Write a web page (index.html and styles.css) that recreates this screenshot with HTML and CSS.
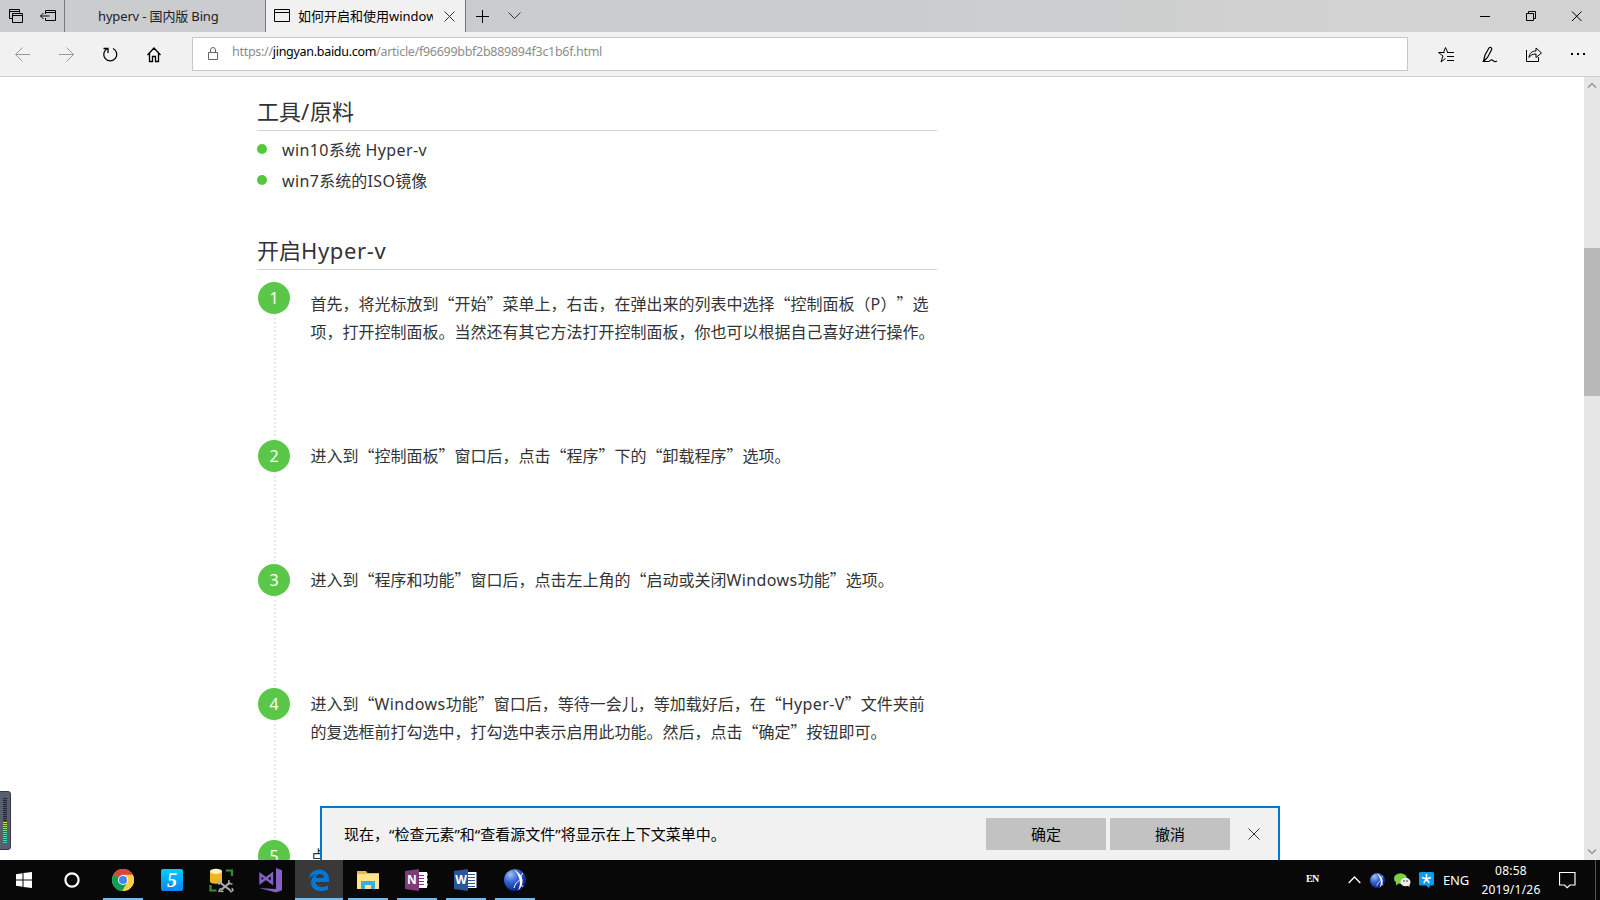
FILE: index.html
```html
<!DOCTYPE html>
<html lang="zh-CN">
<head>
<meta charset="utf-8">
<title>如何开启和使用windows</title>
<link rel="stylesheet" href="styles.css">
</head>
<body>
<svg width="0" height="0" class="defs">
  <defs>
    <radialGradient id="orb" cx=".3" cy=".25" r=".8"><stop offset="0" stop-color="#9fc0f4"/><stop offset=".45" stop-color="#3565cf"/><stop offset="1" stop-color="#0c1f8c"/></radialGradient>
    <symbol id="sphere" viewBox="0 0 22 22">
      <circle cx="11" cy="11" r="11" fill="url(#orb)"/>
      <path d="M10.500 1C15 3 18.500 7.500 18.500 12c0 3.500-1.500 7-4.500 9.500 1.500-3.500 2.300-6.500 1.800-9.500C15 8 13.500 4 10.500 1z" fill="#fff"/>
      <path d="M18.800 4c-1 1.500-1.800 3-2.300 5.500M16.500 13.500c.8 2 1.500 3.500 2.700 4.500M15.500 11.500C12.500 13 11 15.500 10 19" fill="none" stroke="#fff" stroke-width="1"/>
    </symbol>
  </defs>
</svg>

<header class="tabstrip">
  <div class="tab-tools">
    <svg class="i-stack" width="16" height="16" viewBox="0 0 16 16"><path d="M4.500 10.500h-3v-9h10v3M1.500 3.500h10M4.500 5.500h10v9h-10zM4.500 7.500h10" class="ln"/></svg>
    <svg class="i-aside" width="17" height="14" viewBox="0 0 17 14"><path d="M5.500 5V1.500h10v10h-10V9M5.500 3.500h10M.5 7h9M3.500 4L.5 7l3 3" class="ln"/></svg>
  </div>
  <div class="tab">hyperv - <span class="cn">国内版</span> Bing</div>
  <div class="tab active">
    <svg width="17" height="14" viewBox="0 0 17 14"><path d="M.5.5h15v12H.5zM.5 3.500h15" class="ln"/></svg>
    <div class="tab-title"><span class="cn">如何开启和使用</span>windows</div>
    <svg width="11" height="11" viewBox="0 0 11 11"><path d="M.5.500l10 10M10.500.5l-10 10" class="ln thin"/></svg>
  </div>
  <svg class="i-plus" width="13" height="13" viewBox="0 0 13 13"><path d="M6.500 0v13M0 6.500h13" class="ln"/></svg>
  <svg class="i-down" width="13" height="8" viewBox="0 0 13 8"><path d="M.5.500l6 6 6-6" class="ln thin"/></svg>
  <div class="window-buttons">
    <svg width="46" height="32"><path d="M18 16.500h10" class="ln"/></svg>
    <svg width="46" height="32"><path d="M18.500 13.500h7v7h-7zM20.500 13v-1.500h7v7H26" class="ln"/></svg>
    <svg width="46" height="32"><path d="M18 11.500l9.500 9.500M27.500 11.500L18 21" class="ln"/></svg>
  </div>
</header>

<nav class="toolbar">
  <div class="nav-buttons">
    <svg width="44" height="44"><path d="M30 22.500H15.500M22.500 15.500l-7 7 7 7" class="ln off"/></svg>
    <svg width="44" height="44"><path d="M15 22.500h14.500M22.500 15.500l7 7-7 7" class="ln off"/></svg>
    <svg width="44" height="44"><path d="M19.500 16.500a6.500 6.500 0 1 0 5.500 0M15.500 16.500h4.500v4.500" class="ln refresh"/></svg>
    <svg width="44" height="44"><path d="M15.500 23l6.500-7 6.500 7M17.500 21v8.500h3v-5h3v5h3V21" class="ln home"/></svg>
  </div>
  <div class="address">
    <svg width="11" height="14" viewBox="0 0 11 14"><path d="M.5 5.500h9v7h-9zM2.500 5.500V3a2.500 2.500 0 0 1 5 0v2.500" class="ln lock"/></svg>
    <span class="url">https://<b>jingyan.baidu.com</b>/article/f96699bbf2b889894f3c1b6f.html</span>
  </div>
  <div class="hub-buttons">
    <svg width="44" height="44"><path d="M19.500 20.500H13.500l4.500 3.500-2 6 4.500-3.500M15 20.500h3.500l2-5 2 4.500" class="ln"/><path d="M22 20.500h7M22 24.500h7M22 28.500h7" class="ln"/></svg>
    <svg width="44" height="44"><path d="M14.500 29.500l1.500-6.500 4-7c1-1.300 3.200-.3 2.700 1.500l-4.200 8-4 4h5.500c1.500-2 3-1.800 4-.8s2 1.500 4 .3" class="ln pen"/></svg>
    <svg width="44" height="44"><path d="M13.500 18v11.500h12V25" class="ln"/><path d="M16 25.500c.5-4.500 3-6.500 7-6.500v-3l5.500 5-5.500 4.500V22c-3 0-5 .5-7 3.500z" class="ln"/></svg>
    <svg width="44" height="44"><path d="M14 21h2v2h-2zM20 21h2v2h-2zM26 21h2v2h-2z"/></svg>
  </div>
</nav>

<main class="viewport">
  <article class="article">
    <h2 class="first">工具<span class="en">/</span>原料</h2>
    <ul class="tools">
      <li><span class="en">win10</span>系统<span class="en"> Hyper-v</span></li>
      <li><span class="en">win7</span>系统的<span class="en">ISO</span>镜像</li>
    </ul>
    <h2>开启<span class="en">Hyper-v</span></h2>
    <ol class="steps">
      <li class="tall"><i>1</i><p>首先，将光标放到“开始”菜单上，右击，在弹出来的列表中选择“控制面板（<span class="en">P</span>）”选<br>项，打开控制面板。当然还有其它方法打开控制面板，你也可以根据自己喜好进行操作。</p></li>
      <li><i>2</i><p>进入到“控制面板”窗口后，点击“程序”下的“卸载程序”选项。</p></li>
      <li><i>3</i><p>进入到“程序和功能”窗口后，点击左上角的“启动或关闭<span class="en">Windows</span>功能”选项。</p></li>
      <li class="two"><i>4</i><p>进入到“<span class="en">Windows</span>功能”窗口后，等待一会儿，等加载好后，在“<span class="en">Hyper-V</span>”文件夹前<br>的复选框前打勾选中，打勾选中表示启用此功能。然后，点击“确定”按钮即可。</p></li>
      <li><i>5</i><p>点</p></li>
    </ol>
  </article>
  <div class="scrollbar">
    <svg width="16" height="17"><path d="M4 10.500l4-4 4 4"/></svg>
    <div class="thumb"></div>
    <svg width="16" height="17"><path d="M4 6.500l4 4 4-4"/></svg>
  </div>
  <div class="meter"><div class="bars"></div></div>
  <div class="notice">
    <p>现在，<q>“</q>检查元素<q>”</q>和<q>“</q>查看源文件<q>”</q>将显示在上下文菜单中。</p>
    <button>确定</button>
    <button>撤消</button>
    <svg width="12" height="12"><path d="M.5.500l11 11M11.500.5l-11 11" class="ln thin"/></svg>
  </div>
</main>

<footer class="taskbar">
  <div class="app start"><svg width="16" height="16"><path fill="#fff" d="M0 2.200L6.500 1.200V7.500H0zM7.500 1L16 0v7.500H7.500zM0 8.500h6.500v6.300L0 13.800zM7.500 8.500H16V16l-8.500-1z"/></svg></div>
  <div class="app start"><svg width="16" height="16"><circle cx="8" cy="8" r="6.600" fill="none" stroke="#fff" stroke-width="2.200"/></svg></div>
  <div class="app run"><svg width="22" height="22" viewBox="0 0 22 22"><circle cx="11" cy="11" r="11" fill="#ffcd40"/><path d="M11 11L1.500 5.500a11 11 0 0 1 19 0z" fill="#db4437"/><path d="M1.500 5.500A11 11 0 0 0 10.500 22l4.500-8.500-4-2.500z" fill="#0f9d58"/><path d="M11 5.800h9.700A11 11 0 0 1 10.500 22L15 13.500z" fill="#ffcd40"/><circle cx="11" cy="11" r="5" fill="#fff"/><circle cx="11" cy="11" r="4.100" fill="#4285f4"/></svg></div>
  <div class="app"><div class="five">5</div></div>
  <div class="app"><svg width="25" height="25" viewBox="0 0 25 25"><path d="M1 3v10.500c0 3 12 3 12 0V3z" fill="#f2b41c"/><ellipse cx="7" cy="3.300" rx="6" ry="2.600" fill="#fff0c4"/><path d="M17 2.500h6v5.500M1.500 17v5.500h6" fill="none" stroke="#37912f" stroke-width="2.200"/><path d="M11 14.500l10.500 8M12 22l9-7.500" stroke="#aaa" stroke-width="2.200" fill="none"/><path d="M9 12.500l1 3.500 3-1.500M20 12l-.5 3.500 4 .5M14.500 23.500l-4.500-.5 1.500-3M23 20l1 2.500-3 1.500" stroke="#aaa" stroke-width="1.500" fill="none"/></svg></div>
  <div class="app"><svg width="25" height="25" viewBox="0 0 25 25"><path fill="#865fc5" d="M18 0l6 2.200v20L18 24.500 1 20l17 1z"/><path d="M2.500 6.500v8L14 6v9z" fill="none" stroke="#865fc5" stroke-width="2.400"/></svg></div>
  <div class="app run active"><svg width="22" height="22" viewBox="0 0 22 22"><path fill="#0078d7" d="M1 10C1.500 4 6 .5 11 .5c6.500 0 10 4.500 10 10V13H7.500c.3 3.500 3.500 5 6.800 5 2.200 0 4-.6 5.700-1.500v4C18 21.500 15.500 22 13 22c-6 0-10-3.500-10-8.500 0-3.500 2-6.300 5-7.500C4.500 6 2.500 8 1 10zm6.700-1h8.200c0-2.500-1.500-4-3.900-4S8 6.700 7.700 9z"/></svg></div>
  <div class="app run"><svg width="22" height="20" viewBox="0 0 22 20"><path fill="#e8b93c" d="M0 1h9l1.500 2H22v4H0z"/><path fill="#ffe38d" d="M0 4h22v15H0z"/><path fill="#38aee6" d="M4 19v-8h14v8h-4v-4H8v4z"/></svg></div>
  <div class="app run"><div class="office note"><b>N</b><svg width="9" height="18"><path d="M0 1h8v16H0z" fill="#fff"/><path d="M8 2h1v3H8zM8 7h1v3H8zM8 12h1v3H8z" fill="#b06aab"/><path d="M0 4.500h5M0 7.500h5M0 10.500h5M0 13.500h5" stroke="#80397b"/></svg></div></div>
  <div class="app run"><div class="office word"><b>W</b><svg width="9" height="18"><path d="M0 1h8.500v16H0z" fill="#fff"/><path d="M0 3.500h7M0 6.500h7M0 9.500h7M0 12.500h7M0 15.500h7" stroke="#2b579a"/></svg></div></div>
  <div class="app run"><svg width="22" height="22"><use href="#sphere"/></svg></div>
  <div class="tray">
    <span class="ime">EN</span>
    <svg class="t-up" width="13" height="8"><path d="M.7 7l5.800-6 5.800 6" fill="none" stroke="#fff" stroke-width="1.300"/></svg>
    <svg class="t-orb" width="15" height="15"><use href="#sphere"/></svg>
    <svg class="t-chat" width="17" height="14" viewBox="0 0 17 14"><ellipse cx="6.500" cy="5.500" rx="6.500" ry="5.300" fill="#7ed043"/><path d="M2 9l0 3.500L5 10z" fill="#7ed043"/><ellipse cx="11.500" cy="9" rx="5" ry="4.300" fill="#eee"/><path d="M13 12l2.500 2 0-3z" fill="#eee"/><circle cx="10" cy="8" r=".7"/><circle cx="13" cy="8" r=".7"/></svg>
    <svg class="t-star" width="15" height="16"><path d="M1.500 0h12Q15 0 15 1.500v10.500Q15 13.500 13.500 13.500H11l-1 2.500-3-2.500H1.500Q0 13.500 0 12v-10.500Q0 0 1.500 0z" fill="#0a9bf5"/><path d="M7.500 7V2M7.500 7l4.500-1.500M7.500 7l2.800 4M7.500 7l-2.800 4M7.500 7L3 5.500" fill="none" stroke="#fff" stroke-width="1.500"/></svg>
    <span class="lang">ENG</span>
    <div class="clock"><span>08:58</span><span>2019/1/26</span></div>
    <svg class="t-msg" width="17" height="17"><path d="M.5.500h15.500v12.500h-5L8.200 15.700 5.500 13h-5z" fill="none" stroke="#fff" stroke-width="1.200"/></svg>
    <div class="peek"></div>
  </div>
</footer>
</body>
</html>
```

FILE: styles.css
```css
* { box-sizing: border-box; }

body {
  margin: 0;
  width: 1600px;
  height: 900px;
  overflow: hidden;
  display: flex;
  flex-direction: column;
  background: #fff;
  font-family: "Noto Sans", "Noto Sans CJK SC", sans-serif;
  color: #333;
}

svg { display: block; flex: none; }
.defs { position: absolute; }
.cn { font-family: "Noto Sans CJK SC", sans-serif; }
.en { font-family: "Noto Sans", sans-serif; letter-spacing: .025em; line-height: 1; }

.ln { fill: none; stroke: #000; stroke-width: 1; }
.thin { stroke: #333; }
.off { stroke: #999; }
.refresh, .home { stroke-width: 1.300; }
.pen { stroke-width: 1.200; }
.lock { stroke: #666; }

/* Tab strip */
.tabstrip {
  flex: none;
  height: 32px;
  display: flex;
  align-items: center;
  background: linear-gradient(90deg, #cbcccf 0, #cacbcd 50%, #d2d2d2 85%);
  font-size: 13px;
}
.tab-tools {
  width: 65px;
  height: 32px;
  display: flex;
  align-items: center;
  gap: 16px;
  padding-left: 8px;
  border-right: 1px solid #77787a;
}
.tab {
  width: 200px;
  height: 32px;
  padding-left: 33px;
  line-height: 32px;
  color: #222;
  white-space: pre;
  letter-spacing: -.15px;
}
.tab.active {
  width: 201px;
  display: flex;
  align-items: center;
  padding: 0 10px 0 8px;
  background: #f1f1f1;
  border: solid #77787a;
  border-width: 0 1px;
  color: #000;
  letter-spacing: 0;
}
.tab-title { width: 135px; margin: 0 11px 0 7px; overflow: hidden; }
.i-plus { margin-left: 10px; }
.i-down { margin-left: 19px; }
.window-buttons { margin-left: auto; display: flex; }

/* Toolbar */
.toolbar {
  flex: none;
  height: 45px;
  display: flex;
  align-items: flex-start;
  background: #f1f1f1;
  border-bottom: 1px solid #cdcdcd;
}
.nav-buttons { width: 192px; display: flex; }
.address {
  flex: none;
  width: 1216px;
  height: 34px;
  margin-top: 5px;
  display: flex;
  align-items: center;
  gap: 13px;
  padding-left: 15px;
  border: 1px solid #c8c8c8;
  background: #fff;
  font-size: 12.500px;
}
.nav-buttons { flex: none; }
.url { color: #8c8c8c; padding-bottom: 5px; letter-spacing: -.29px; }
.url b { color: #000; font-weight: 400; }
.hub-buttons { margin-left: 17px; display: flex; }

/* Page */
.viewport {
  position: relative;
  flex: none;
  height: 783px;
  display: flex;
  justify-content: space-between;
  overflow: hidden;
}
.article {
  width: 680px;
  margin-left: 257px;
  font-family: "Noto Sans CJK SC", sans-serif;
  font-size: 16px;
  text-spacing-trim: space-all;
}
h2 {
  margin: 0;
  height: 54px;
  padding-top: 17px;
  border-bottom: 1px solid #d2d2d2;
  font-size: 22px;
  line-height: 32px;
  font-weight: 400;
}
h2 .en { letter-spacing: .03em; }
.tools { margin: 4px 0 19px; padding: 0; list-style: none; height: 62px; }
.tools li {
  height: 31px;
  line-height: 29px;
  display: flex;
  align-items: baseline;
  white-space: pre;
}
.tools li::before {
  content: "";
  width: 10px;
  height: 10px;
  margin: 0 15px 0 0;
  align-self: flex-start;
  margin-top: 9px;
  border-radius: 50%;
  background: #55c73a;
}
.steps { margin: 12px 0 0; padding: 0; list-style: none; }
.steps li {
  height: 124px;
  display: flex;
  align-items: flex-start;
  padding-left: 1px;
  background: repeating-linear-gradient(180deg, #eaeaea 0 2px, transparent 2px 4px) 17px 0 / 2px 100% no-repeat;
}
.steps li.tall { height: 158px; }
.steps li.two { height: 152px; }
.steps i {
  flex: none;
  width: 32px;
  height: 32px;
  border-radius: 50%;
  background: #5bc748;
  color: #fff;
  font: 16px/32px "Noto Sans", sans-serif;
  text-align: center;
}
.steps p { margin: 1px 0 0 20.500px; line-height: 28px; white-space: nowrap; }
.steps .tall p { margin-top: 7px; }

.scrollbar {
  width: 16px;
  display: flex;
  flex-direction: column;
  background: #e6e6e6;
}
.scrollbar path { fill: none; stroke: #8a8a8a; stroke-width: 1.200; }
.scrollbar svg:last-child { margin-top: auto; }
.thumb { height: 148px; margin-top: 154px; background: #b9b9b9; }

/* Level meter docked at the left edge */
.meter {
  position: absolute;
  left: -4px;
  top: 714px;
  width: 15px;
  height: 59px;
  padding: 6px 0 0 6px;
  border: 1px solid #353945;
  border-radius: 3px;
  background: #5a5f6e;
}
.bars {
  width: 4px;
  height: 46px;
  background:
    repeating-linear-gradient(180deg, transparent 0 1px, #50566a 1px 2px),
    linear-gradient(180deg, #24272f 0 24px, #c8dc50 24px, #5fd9a0 36px, #46d6d0);
}

/* Notification bar floating over the page */
.notice {
  position: absolute;
  left: 320px;
  top: 729px;
  width: 960px;
  height: 54px;
  display: flex;
  align-items: center;
  padding-left: 22px;
  background: #f1f1f1;
  border: solid #0078d7;
  border-width: 2px 2px 0;
  color: #000;
  font: 15px "Noto Sans CJK SC", sans-serif;
}
.notice p { width: 642px; margin: 0; padding-bottom: 1px; }
.notice q { font-family: "Noto Sans", sans-serif; quotes: none; }
.notice button {
  width: 120px;
  height: 32px;
  margin: 4px 4px 4px 0;
  padding: 0 0 2px;
  border: 0;
  background: #c2c2c2;
  font: inherit;
}
.notice svg { margin-left: 14px; }

/* Taskbar */
.taskbar {
  flex: none;
  height: 40px;
  display: flex;
  background: #080808;
  color: #fff;
}
.app {
  width: 40px;
  height: 40px;
  margin-right: 9px;
  display: flex;
  align-items: center;
  justify-content: center;
  border-bottom: 2px solid transparent;
  padding-top: 2px;
}
.app.start { width: 48px; margin: 0; }
.app.start + .run { margin-left: 7px; }
.app.run { border-color: #76b9ed; }
.app.active { width: 48px; margin: 0 5px 0 -4px; background: #393939; }
.five {
  width: 22px;
  height: 22px;
  border-radius: 2px;
  background: linear-gradient(#00cdfb, #0a86f5);
  font: italic bold 20px/22px "Liberation Serif", serif;
  text-align: center;
}
.office { width: 24px; height: 22px; display: flex; align-items: center; }
.office b {
  width: 14px;
  height: 22px;
  clip-path: polygon(0 2px, 100% 0, 100% 100%, 0 20px);
  font: bold 12px/22px "Open Sans", sans-serif;
  text-align: center;
}
.note b { background: #80397b; }
.word b { background: #2b579a; }
.tray { margin-left: auto; display: flex; align-items: center; }
.ime { font: bold 10px "Liberation Serif", serif; letter-spacing: -.6px; padding-bottom: 4px; width: 42px; }
.t-orb { margin-left: 9px; }
.t-chat { margin-left: 9px; }
.t-star { margin-left: 8px; }
.lang { width: 38px; margin-left: 9px; font-size: 13px; letter-spacing: -.2px; }
.clock {
  width: 60px;
  display: flex;
  flex-direction: column;
  align-items: center;
  font-size: 12px;
  line-height: 19px;
  letter-spacing: .25px;
}
.t-msg { margin-left: 18px; }
.peek { width: 1px; height: 40px; margin: 0 4px 0 19px; background: #555; }
```
